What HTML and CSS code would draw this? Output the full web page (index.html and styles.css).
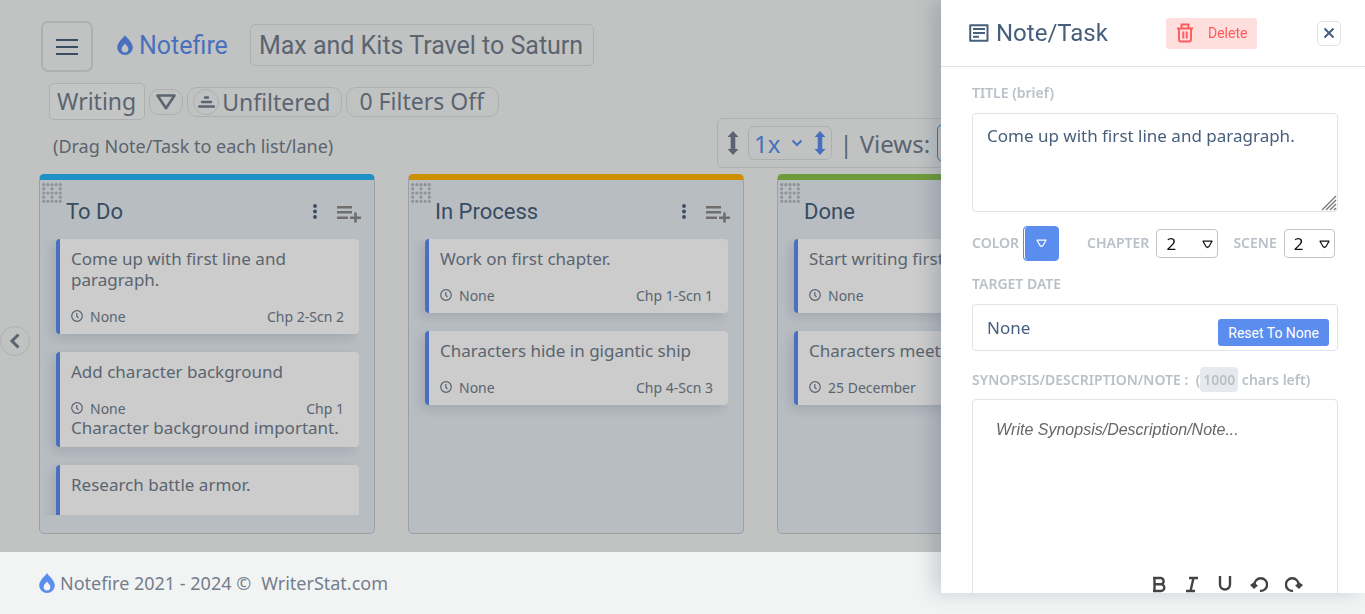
FILE: index.html
```html
<!DOCTYPE html>
<html lang="en">
<head>
  <meta charset="UTF-8">
  <meta name="viewport" content="width=device-width, initial-scale=1.0">
  <title>Notefire</title>
  <link rel="stylesheet" href="styles.css">
</head>
<body>

  <!-- Shared icons -->
  <svg class="sprite" aria-hidden="true">
    <symbol id="flame" viewBox="0 0 16 20">
      <path fill-rule="evenodd" d="M8 0C9.500 3 15.800 7.200 15.800 12.400a7.800 7.600 0 0 1-15.600 0C.2 7.200 6.500 3 8 0zM8 8.600C7 10.200 4.600 11.600 4.600 14a3.400 3.400 0 0 0 6.800 0C11.400 11.600 9 10.200 8 8.600z"/>
    </symbol>
    <symbol id="triangle" viewBox="0 0 20 16">
      <path d="M1.500 1.500h17L10 14.200z" fill="none" stroke="currentColor" stroke-width="2.600" stroke-linejoin="round"/>
    </symbol>
    <symbol id="caret" viewBox="0 0 11 9">
      <path d="M1 1.200h9L7 6.500 5.500 7.600 4 6.500z" fill="none" stroke="currentColor" stroke-width="1.200" stroke-linejoin="round"/>
    </symbol>
    <symbol id="updown" viewBox="0 0 12 24">
      <path d="M6 0l5.500 6H8.300v12h3.200L6 24 .5 18h3.200V6H.5z"/>
    </symbol>
    <symbol id="clock" viewBox="0 0 12 12">
      <path d="M6 .7a5.300 5.300 0 1 0 0 10.600A5.300 5.300 0 0 0 6 .7zM5.800 3v3.200l1.700 2" fill="none" stroke="currentColor" stroke-width="1.200"/>
    </symbol>
    <symbol id="grip" viewBox="0 0 20 20">
      <path d="M1.700 1.700h17M1.700 10h17M1.700 18.300h17M1.700 1.700v17M10 1.700v17M18.300 1.700v17" fill="none" stroke="currentColor" stroke-width="3.200" stroke-linecap="round" stroke-dasharray="0 4.150"/>
    </symbol>
    <symbol id="dots" viewBox="0 0 4 16">
      <circle cx="2" cy="2" r="1.900"/><circle cx="2" cy="7.500" r="1.900"/><circle cx="2" cy="13" r="1.900"/>
    </symbol>
    <symbol id="list-add" viewBox="0 0 24 18">
      <path d="M0 2.300h15M0 7.300h15M0 12.700h11M18.500 7.500v10M13 12.700h11" fill="none" stroke="currentColor" stroke-width="2.600"/>
    </symbol>
  </svg>

  <main class="app">
    <header class="topbar">
      <button class="menu-btn" type="button" aria-label="Menu">
        <svg width="22" height="18" viewBox="0 0 22 18"><path d="M0 2h22M0 9h22M0 16h22" fill="none" stroke="currentColor" stroke-width="2"/></svg>
      </button>
      <a class="brand" href="#">
        <svg width="16" height="20"><use href="#flame"/></svg>
        Notefire
      </a>
      <button class="project-btn" type="button">Max and Kits Travel to Saturn</button>
    </header>

    <div class="filters">
      <button class="stage-btn" type="button">Writing</button>
      <button class="pill pill-small" type="button" aria-label="Choose stage">
        <svg width="20" height="16"><use href="#triangle"/></svg>
      </button>
      <button class="pill pill-icon" type="button">
        <span class="round">
          <svg width="17" height="12" viewBox="0 0 17 12"><path d="M7 1.500h3M4 6h9M1 10.500h15" fill="none" stroke="currentColor" stroke-width="2.400" stroke-linecap="round"/></svg>
        </span>
        Unfiltered
      </button>
      <button class="pill" type="button">0 Filters Off</button>
    </div>

    <div class="subbar">
      <p class="hint">(Drag Note/Task to each list/lane)</p>
      <div class="view-tools">
        <svg width="12" height="24"><use href="#updown"/></svg>
        <button class="zoom-btn" type="button">
          1x
          <svg width="12" height="8" viewBox="0 0 12 8"><path d="M1.500 1.500L6 6l4.500-4.500" fill="none" stroke="currentColor" stroke-width="2"/></svg>
          <svg width="12" height="24"><use href="#updown"/></svg>
        </button>
        <span class="divider">|</span>
        <span>Views:</span>
        <button class="view-btn" type="button" aria-label="Board"></button>
      </div>
    </div>

    <div class="board">
      <section class="lane lane-todo">
        <header class="lane-head">
          <svg class="grip" width="20" height="20"><use href="#grip"/></svg>
          <h2>To Do</h2>
          <button class="icon-btn" type="button" aria-label="List options"><svg width="4" height="16"><use href="#dots"/></svg></button>
          <button class="icon-btn add" type="button" aria-label="Add note"><svg width="24" height="18"><use href="#list-add"/></svg></button>
        </header>
        <div class="cards">
          <article class="card">
            <h3>Come up with first line and paragraph.</h3>
            <div class="card-foot"><svg width="12" height="12"><use href="#clock"/></svg><span>None</span><span class="place">Chp 2-Scn 2</span></div>
          </article>
          <article class="card">
            <h3>Add character background</h3>
            <div class="card-foot"><svg width="12" height="12"><use href="#clock"/></svg><span>None</span><span class="place">Chp 1</span></div>
            <p>Character background important.</p>
          </article>
          <article class="card">
            <h3>Research battle armor.</h3>
            <div class="card-foot"></div>
          </article>
        </div>
      </section>

      <section class="lane lane-process">
        <header class="lane-head">
          <svg class="grip" width="20" height="20"><use href="#grip"/></svg>
          <h2>In Process</h2>
          <button class="icon-btn" type="button" aria-label="List options"><svg width="4" height="16"><use href="#dots"/></svg></button>
          <button class="icon-btn add" type="button" aria-label="Add note"><svg width="24" height="18"><use href="#list-add"/></svg></button>
        </header>
        <div class="cards">
          <article class="card">
            <h3>Work on first chapter.</h3>
            <div class="card-foot"><svg width="12" height="12"><use href="#clock"/></svg><span>None</span><span class="place">Chp 1-Scn 1</span></div>
          </article>
          <article class="card">
            <h3>Characters hide in gigantic ship</h3>
            <div class="card-foot"><svg width="12" height="12"><use href="#clock"/></svg><span>None</span><span class="place">Chp 4-Scn 3</span></div>
          </article>
        </div>
      </section>

      <section class="lane lane-done">
        <header class="lane-head">
          <svg class="grip" width="20" height="20"><use href="#grip"/></svg>
          <h2>Done</h2>
        </header>
        <div class="cards">
          <article class="card">
            <h3>Start writing first</h3>
            <div class="card-foot"><svg width="12" height="12"><use href="#clock"/></svg><span>None</span></div>
          </article>
          <article class="card">
            <h3>Characters meet</h3>
            <div class="card-foot"><svg width="12" height="12"><use href="#clock"/></svg><span>25 December</span></div>
          </article>
        </div>
      </section>
    </div>

    <button class="back-btn" type="button" aria-label="Scroll left">
      <svg width="12" height="16" viewBox="0 0 12 16"><path d="M9.500 1.500L3 8l6.500 6.500" fill="none" stroke="currentColor" stroke-width="3"/></svg>
    </button>
    <div class="overlay"></div>
  </main>

  <footer class="footer">
    <svg width="16" height="20"><use href="#flame"/></svg>
    <span>Notefire 2021 - 2024 ©</span>
    <a href="#">WriterStat.com</a>
  </footer>

  <!-- Note editor drawer -->
  <aside class="drawer">
    <header class="drawer-head">
      <svg width="20" height="18" viewBox="0 0 20 18"><path d="M1.200 1.200h17.300v15.600H1.200zM4 5h12M4 9h12M4 12.800h6" fill="none" stroke="currentColor" stroke-width="2" stroke-linejoin="round"/></svg>
      <h1>Note/Task</h1>
      <button class="delete-btn" type="button">
        <svg width="18" height="20" viewBox="0 0 18 20"><path d="M1 5.500h16M3 5.500v11q0 2 2 2h8q2 0 2-2v-11M5.500 5V1.500h7V5M7.300 8.500v7M10.700 8.500v7" fill="none" stroke="currentColor" stroke-width="1.900"/></svg>
        Delete
      </button>
      <button class="close-btn" type="button" aria-label="Close">
        <svg width="12" height="12" viewBox="0 0 12 12"><path d="M1.500 1.500l9 9M10.500 1.500l-9 9" fill="none" stroke="currentColor" stroke-width="2"/></svg>
      </button>
    </header>

    <form class="drawer-body">
      <label class="field-label" for="title">TITLE (brief)</label>
      <div class="title-wrap">
        <textarea id="title" name="title">Come up with first line and paragraph.</textarea>
        <svg class="resizer" width="16" height="16" viewBox="0 0 16 16"><path d="M1 15L15 1M5 15L15 5M9 15l6-6M13 15l2-2" fill="none" stroke="currentColor" stroke-width="1.300"/></svg>
      </div>

      <div class="options">
        <label class="field-label" for="color">COLOR</label>
        <button class="color-btn" id="color" type="button" aria-label="Color">
          <svg width="11" height="9"><use href="#caret"/></svg>
        </button>
        <label class="field-label" for="chapter">CHAPTER</label>
        <div class="select-wrap">
          <select class="chapter" id="chapter" name="chapter"><option>2</option></select>
          <svg width="11" height="9"><use href="#caret"/></svg>
        </div>
        <label class="field-label scene-label" for="scene">SCENE</label>
        <div class="select-wrap">
          <select class="scene" id="scene" name="scene"><option>2</option></select>
          <svg width="11" height="9"><use href="#caret"/></svg>
        </div>
      </div>

      <label class="field-label" for="date">TARGET DATE</label>
      <div class="date-wrap">
        <input type="text" id="date" name="date" value="None">
        <button class="reset-btn" type="button">Reset To None</button>
      </div>

      <label class="field-label" for="synopsis">SYNOPSIS/DESCRIPTION/NOTE :&nbsp; (<span class="count">1000</span> chars left)</label>
      <div class="editor">
        <textarea id="synopsis" name="synopsis" placeholder="Write Synopsis/Description/Note..."></textarea>
        <div class="editor-tools">
          <button type="button" aria-label="Bold"><svg width="16" height="18" viewBox="0 0 16 18"><path d="M2 2h7.500a3 3 0 0 1 0 6.300H3.500M3.500 8.300H10a3.300 3.300 0 0 1 0 6.700H2M3.500 2v13"/></svg></button>
          <button type="button" aria-label="Italic"><svg width="16" height="18" viewBox="0 0 16 18"><path d="M5 2h9M2 15h9M9.500 2l-3 13"/></svg></button>
          <button type="button" aria-label="Underline"><svg width="16" height="18" viewBox="0 0 16 18"><path d="M3 0v8.500a5 5 0 0 0 10 0V0"/></svg></button>
          <button type="button" aria-label="Undo"><svg width="18" height="18" viewBox="0 0 18 18"><path d="M4.500 9a6.300 6.300 0 1 1 5.500 5.800"/><path class="tip" d="M0 9l3.500-2.500L8 9.500 4 13z"/></svg></button>
          <button type="button" aria-label="Redo"><svg width="18" height="18" viewBox="0 0 18 18"><path d="M13.500 9A6.300 6.300 0 1 0 8 14.800"/><path class="tip" d="M18 9l-3.500-2.500L10 9.500l4 3.500z"/></svg></button>
        </div>
      </div>
    </form>
  </aside>

</body>
</html>
```
FILE: styles.css
```css
/* General styles */
* {
  box-sizing: border-box;
}

body {
  font-family: "Noto Sans", sans-serif;
  margin: 0;
  min-height: 100vh;
  overflow: hidden;
  background-color: #f2f4f4;
  color: #727e8c;
}

h1, h2, h3, p {
  margin: 0;
  font-weight: 400;
}

button, input, select, textarea {
  font: inherit;
  color: inherit;
  margin: 0;
}

button {
  background: none;
  border: 1px solid #dadddd;
  padding: 0;
  cursor: pointer;
}

a {
  color: inherit;
  text-decoration: none;
}

svg {
  display: block;
  flex: none;
  fill: currentColor;
}

.sprite {
  position: absolute;
  width: 0;
  height: 0;
}

.app {
  position: relative;
  padding: 21px 30px 18px 39px;
}

/* Dims the board while the drawer is open */
.overlay {
  position: absolute;
  inset: 0;
  background-color: rgba(0, 0, 0, 0.2);
}

/* Top bar */
.topbar {
  display: flex;
  align-items: center;
  padding-left: 2px;
  font-family: Roboto, sans-serif;
  font-size: 25px;
}

.menu-btn {
  display: flex;
  align-items: center;
  justify-content: center;
  width: 52px;
  height: 51px;
  border-width: 2px;
  border-radius: 7px;
  color: #475f7b;
}

.brand {
  display: flex;
  align-items: center;
  gap: 6px;
  margin: 0 22px 3px 24px;
  color: #5a8dee;
}

.project-btn {
  height: 42px;
  margin-bottom: 3px;
  padding: 0 10px 0 8px;
  border-radius: 5px;
}

/* Filter row */
.filters {
  display: flex;
  align-items: center;
  gap: 4px;
  padding: 11px 0 0 10px;
  font-size: 23px;
}

.stage-btn {
  height: 37px;
  padding: 0 8px 2px 7px;
  border-radius: 5px;
  line-height: 30px;
  background-color: #f6f7f7;
}

.pill {
  display: flex;
  align-items: center;
  gap: 3px;
  height: 30px;
  padding: 0 14px 2px 12px;
  border-radius: 10px;
  line-height: 28px;
}

.pill-small {
  height: 26px;
  padding: 0 6px;
}

.pill-icon {
  padding: 0 11px 0 5px;
}

.round {
  display: flex;
  align-items: center;
  justify-content: center;
  width: 26px;
  height: 26px;
  border: 1px solid #dadddd;
  border-radius: 50%;
}

/* Hint and view tools */
.subbar {
  display: grid;
  grid-template-columns: 664px 1fr;
  align-items: center;
  margin: -2px 0 6px 14px;
  font-size: 18px;
}

.hint {
  padding-top: 6px;
}

.view-tools {
  display: flex;
  align-items: center;
  height: 50px;
  padding: 0 9px;
  border: 1px solid #dadddd;
  border-radius: 6px;
  font-size: 24px;
}

.zoom-btn {
  display: flex;
  align-items: center;
  gap: 11px;
  height: 34px;
  margin-left: 9px;
  padding: 0 5px;
  border-radius: 6px;
  color: #5a8dee;
}

.divider {
  margin: 0 7px;
}

.view-btn {
  width: 60px;
  height: 38px;
  margin-left: 7px;
  border: 1px solid #3a9be0;
  border-radius: 6px;
}

/* Lanes */
.board {
  display: grid;
  grid-template-columns: repeat(3, 336px);
  gap: 33px;
}

.lane {
  height: 360px;
  border: 1px solid #c4c8cb;
  border-top: 6px solid;
  border-radius: 5px;
  background-color: #e6edf3;
}

.lane-todo {
  border-top-color: #29b6f6;
}

.lane-process {
  border-top-color: #ffb300;
}

.lane-done {
  border-top-color: #8bc34a;
}

.lane-head {
  display: flex;
  align-items: center;
  height: 59px;
  padding: 3px 13px 0 2px;
}

.lane-head h2 {
  flex: 1;
  margin-left: 4px;
  font-family: Roboto, sans-serif;
  font-size: 22px;
  color: #475f7b;
}

.grip {
  align-self: flex-start;
  color: #b4b8bb;
}

.icon-btn {
  border: 0;
  padding-top: 2px;
  color: #475f7b;
}

.add {
  margin-left: 20px;
  padding-top: 6px;
  color: #8a8a8a;
}

.cards {
  height: 276px;
  margin-right: 15px;
  padding-left: 16px;
  overflow: hidden;
}

.card {
  margin-bottom: 18px;
  padding: 9px 15px 9px 11px;
  border-left: 4px solid #5a8dee;
  border-radius: 4px;
  background-color: #fff;
  box-shadow: -4px 4px 12px rgba(25, 42, 70, 0.13);
}

.card h3, .card p {
  font-size: 17px;
  line-height: 21px;
}

.card h3 {
  margin-bottom: 17px;
}

.card-foot {
  display: flex;
  align-items: center;
  gap: 7px;
  height: 18px;
  font-size: 14px;
}

.place {
  margin-left: auto;
}

.back-btn {
  position: absolute;
  top: 326px;
  left: 0;
  display: flex;
  align-items: center;
  justify-content: center;
  width: 30px;
  height: 30px;
  border-radius: 50%;
}

.footer {
  display: flex;
  align-items: center;
  height: 62px;
  padding-left: 39px;
  font-size: 18px;
}

.footer svg {
  margin-right: 5px;
  color: #5a8dee;
}

.footer a {
  margin-left: 10px;
}

/* Drawer */
.drawer {
  position: fixed;
  top: 0;
  right: 0;
  bottom: 21px;
  width: 424px;
  overflow: hidden;
  background-color: #fff;
  box-shadow: -8px 0 18px rgba(25, 42, 70, 0.18);
  color: #475f7b;
}

.drawer-head {
  display: flex;
  align-items: center;
  height: 67px;
  padding: 0 24px 0 28px;
  border-bottom: 1px solid #dfe3e7;
}

.drawer-head h1 {
  width: 170px;
  margin-left: 7px;
  font-family: Roboto, sans-serif;
  font-size: 24px;
}

.delete-btn {
  display: flex;
  align-items: center;
  gap: 14px;
  height: 31px;
  padding: 0 10px;
  border: 0;
  border-radius: 3px;
  background-color: #ffdede;
  color: #ff5b5c;
  font-family: Roboto, sans-serif;
  font-size: 14px;
}

.close-btn {
  display: flex;
  align-items: center;
  justify-content: center;
  width: 24px;
  height: 25px;
  margin-left: auto;
  border-color: #dfe3e7;
  border-radius: 5px;
}

.drawer-body {
  padding: 16px 27px 0 31px;
}

.field-label {
  display: block;
  font-size: 14px;
  font-weight: 600;
  line-height: 20px;
  color: #bac0c7;
}

.drawer textarea, .drawer input {
  display: block;
  width: 100%;
  resize: none;
  outline: 0;
}

.title-wrap, .date-wrap, .select-wrap {
  position: relative;
}

.title-wrap {
  margin-top: 10px;
}

.title-wrap textarea {
  height: 99px;
  padding: 9px 14px;
  border: 1px solid #dfe3e7;
  border-radius: 4px;
  font-size: 17px;
  line-height: 25px;
}

.resizer {
  position: absolute;
  right: 1px;
  bottom: 1px;
  color: #777;
}

.options {
  display: flex;
  align-items: center;
  height: 62px;
}

.color-btn {
  display: flex;
  align-items: center;
  justify-content: center;
  width: 36px;
  height: 35px;
  margin: 0 28px 0 4px;
  border: 1px solid #5a8dee;
  border-radius: 4px;
  background-color: #5a8dee;
  box-shadow: inset 1px 0 #fff;
  color: #fff;
}

.select-wrap {
  margin-left: 7px;
  color: #111;
}

.select-wrap svg {
  position: absolute;
  top: 11px;
  right: 5px;
  pointer-events: none;
}

.select-wrap select {
  display: block;
  appearance: none;
  height: 29px;
  padding: 0 9px;
  border: 1px solid #c4c4c4;
  border-radius: 4px;
  background-color: #fff;
  font-size: 17px;
}

.chapter {
  width: 62px;
}

.scene {
  width: 51px;
}

.scene-label {
  margin-left: 15px;
}

.date-wrap {
  margin: 10px 0 19px;
}

.date-wrap input {
  height: 47px;
  padding: 0 14px;
  border: 1px solid #dfe3e7;
  border-radius: 4px;
  font-size: 17px;
}

.reset-btn {
  position: absolute;
  right: 9px;
  bottom: 5px;
  height: 27px;
  padding: 0 10px;
  border: 0;
  border-radius: 3px;
  background-color: #5a8dee;
  color: #fff;
  font-family: Roboto, sans-serif;
  font-size: 14px;
}

.count {
  padding: 3px;
  border-radius: 4px;
  background-color: #e6eaee;
}

.editor {
  display: flex;
  flex-direction: column;
  height: 210px;
  margin-top: 9px;
  border: 1px solid #dfe3e7;
  border-radius: 4px;
}

.editor textarea {
  flex: 1;
  padding: 18px 23px;
  border: 0;
  background: none;
  font: italic 16px/24px "Liberation Sans", Arial, sans-serif;
}

.editor textarea::placeholder {
  color: #666;
}

.editor-tools {
  display: flex;
  justify-content: flex-end;
  gap: 17px;
  height: 32px;
  padding-right: 34px;
}

.editor-tools button {
  display: flex;
  border: 0;
}

.editor-tools path {
  fill: none;
  stroke: #444;
  stroke-width: 2.4;
}

.editor-tools .tip {
  fill: #444;
  stroke: none;
}
```
